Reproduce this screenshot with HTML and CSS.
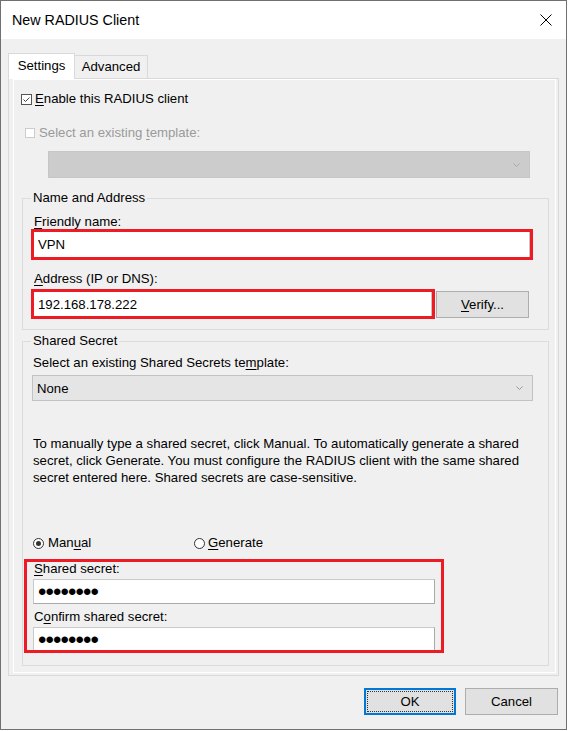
FILE: index.html
```html
<!DOCTYPE html>
<html lang="en">
<head>
<meta charset="utf-8">
<title>New RADIUS Client</title>
<link rel="stylesheet" href="styles.css">
</head>
<body>
<div class="window">
  <div class="titlebar">
    <span class="title">New RADIUS Client</span>
    <svg class="close" width="12" height="12" viewBox="0 0 12 12"><path d="M0.5 0.5 L11.5 11.5 M11.5 0.5 L0.5 11.5" stroke="#000" stroke-width="1" fill="none"/></svg>
  </div>
  <div class="tabs">
    <div class="tab active">Settings</div>
    <div class="tab">Advanced</div>
  </div>
  <div class="panel">
    <div class="page">
      <label class="check row-enable">
        <svg class="box" width="11" height="11" viewBox="0 0 11 11"><rect x="0.5" y="0.5" width="10" height="10" fill="#fff" stroke="#555"/><path d="M2.5 5.5 L4.5 7.5 L8.5 3.5" fill="none" stroke="#444"/></svg>
        <span><u>E</u>nable this RADIUS client</span>
      </label>
      <label class="check row-template">
        <span class="box-disabled"></span>
        <span>Select an existing <u>t</u>emplate:</span>
      </label>
      <div class="combo combo-disabled">
        <span></span>
        <svg width="7" height="4" viewBox="0 0 7 4"><path d="M0.5 0.5 L3.5 3.5 L6.5 0.5" fill="none" stroke="#a8a8a8"/></svg>
      </div>

      <fieldset class="group group-name">
        <legend>Name and Address</legend>
        <div class="field-label label-name"><u>F</u>riendly name:</div>
        <div class="mark mark-name"><div class="textbox">VPN</div></div>
        <div class="field-label label-address"><u>A</u>ddress (IP or DNS):</div>
        <div class="address-row">
          <div class="mark mark-address"><div class="textbox textbox-short">192.168.178.222</div></div>
          <button class="btn verify"><u>V</u>erify...</button>
        </div>
      </fieldset>

      <fieldset class="group group-secret">
        <legend>Shared Secret</legend>
        <div class="field-label label-template">Select an existing Shared Secrets te<u>m</u>plate:</div>
        <div class="combo combo-none">
          <span>None</span>
          <svg width="7" height="4" viewBox="0 0 7 4"><path d="M0.5 0.5 L3.5 3.5 L6.5 0.5" fill="none" stroke="#999"/></svg>
        </div>
        <p class="help">To manually type a shared secret, click Manual. To automatically generate a shared<br>secret, click Generate. You must configure the RADIUS client with the same shared<br>secret entered here. Shared secrets are case-sensitive.</p>
        <div class="radios">
          <label class="radio radio-manual"><span class="dot on"></span>Man<u>u</u>al</label>
          <label class="radio radio-generate"><span class="dot"></span><u>G</u>enerate</label>
        </div>
        <div class="mark mark-secret">
          <div class="field-label label-secret"><u>S</u>hared secret:</div>
          <div class="pw"><span class="dots">••••••••</span></div>
          <div class="field-label label-confirm">C<u>o</u>nfirm shared secret:</div>
          <div class="pw pw-last"><span class="dots">••••••••</span></div>
        </div>
      </fieldset>
    </div>
  </div>
  <div class="actions">
    <button class="btn ok"><span class="focus">OK</span></button>
    <button class="btn cancel">Cancel</button>
  </div>
</div>
</body>
</html>
```

FILE: styles.css
```css
* { box-sizing: border-box; }

body {
  margin: 0;
  background: #ffffff;
  font-family: "Liberation Sans", Arial, sans-serif;
  font-size: 13.2px;
  color: #000;
}

u { text-decoration-thickness: 1px; text-underline-offset: 2px; }

.window {
  width: 567px;
  height: 730px;
  border: 1px solid #707070;
  background: #f0f0f0;
  display: flex;
  flex-direction: column;
}

.titlebar {
  height: 38px;
  flex: none;
  background: #fff;
  display: flex;
  align-items: center;
  justify-content: space-between;
  padding: 0 14px 0 11px;
}
.title { font-size: 14.3px; }
.close { display: block; }

.tabs {
  display: flex;
  align-items: flex-end;
  height: 25px;
  margin: 14px 0 0 7px;
}
.tab {
  width: 73px;
  height: 23px;
  border: 1px solid #d9d9d9;
  border-left: 0;
  border-bottom: 0;
  background: #f0f0f0;
  text-align: center;
  line-height: 22px;
}
.tab.active {
  width: 67px;
  height: 26px;
  border-left: 1px solid #d9d9d9;
  background: #fff;
  margin-bottom: -1px;
  position: relative;
  z-index: 1;
  line-height: 23px;
}

.panel {
  margin: 0 7px;
  border: 1px solid #d9d9d9;
  padding: 0 2px 2px 4px;
}
.page {
  border: 1px solid #fff;
  padding: 0 6px 6px 8px;
}

.check {
  display: flex;
  align-items: center;
  height: 16px;
  line-height: 16px;
}
.row-enable { margin-top: 11px; margin-left: -1px; }
.row-enable .box { display: block; margin-right: 3px; }
.row-template { margin-top: 18px; padding-left: 3px; color: #9a9a9a; }
.box-disabled {
  width: 10px;
  height: 10px;
  border: 1px solid #cccccc;
  background: #fff;
  margin-right: 4px;
}

.combo {
  display: flex;
  align-items: center;
  justify-content: space-between;
}
.combo svg { display: block; }
.combo-disabled {
  margin: 10px 0 0 26px;
  width: 482px;
  height: 27px;
  background: #cccccc;
  border: 1px solid #c6c6c6;
  padding-right: 9px;
}
.combo-none {
  margin: 5px 0 0 9px;
  width: 501px;
  height: 26px;
  background: #e5e5e5;
  border: 1px solid #c2c2c2;
  padding: 0 9px 0 4px;
}

.group {
  margin: 0;
  width: 527px;
  min-width: 0;
  border: 1px solid #dcdcdc;
  padding: 0;
}
.group legend {
  margin-left: 8px;
  padding: 0 2px;
  line-height: 16px;
}
.group-name { margin-top: 12px; padding-bottom: 10px; }
.group-secret { margin-top: 3px; padding-bottom: 12px; }

.field-label {
  height: 14px;
  line-height: 14px;
  margin-left: 11px;
}
.label-name { margin-top: 9px; }
.label-address { margin-top: 12px; }
.label-template { margin-top: 7px; margin-left: 10px; }

.mark { border: 3px solid #ed1c24; }
.mark-name { margin-left: 8px; width: 502px; }
.textbox {
  background: #fff;
  height: 25px;
  display: flex;
  align-items: center;
  padding-left: 4px;
  border-right: 1px solid #c4c4c4;
}
.textbox-short { height: 24px; }

.address-row {
  display: flex;
  align-items: center;
  gap: 1px;
  margin: 3px 0 0 8px;
}
.mark-address { width: 404px; }

.btn {
  font: inherit;
  color: #000;
  background: #e1e1e1;
  border: 1px solid #adadad;
  padding: 0;
}
.verify { width: 93px; height: 27px; }

.help {
  margin: 34px 0 0 10px;
  line-height: 17px;
}

.radios {
  display: flex;
  height: 16px;
  line-height: 16px;
  margin: 49px 0 0 10px;
}
.radio { display: flex; align-items: center; }
.radio-manual { width: 161px; }
.dot {
  width: 11px;
  height: 11px;
  border: 1px solid #333;
  border-radius: 50%;
  background: #fff;
  display: flex;
  align-items: center;
  justify-content: center;
  margin-right: 4px;
}
.radio-generate .dot { margin-right: 3px; }
.dot.on::after {
  content: "";
  width: 5px;
  height: 5px;
  border-radius: 50%;
  background: #333;
}

.mark-secret {
  margin: 8px 0 0 1px;
  width: 420px;
}
.mark-secret .field-label { margin-left: 7px; }
.label-confirm { margin-top: 6px; }
.pw {
  margin: 3px 0 0 6px;
  width: 402px;
  height: 25px;
  background: #fff;
  border: 1px solid;
  border-color: #c9c9c9 #a9a9a9 #a9a9a9 #c9c9c9;
  display: flex;
  align-items: center;
  padding-left: 4px;
}
.pw-last { height: 23px; border-bottom: 0; }
.dots {
  font-size: 24px;
  letter-spacing: -0.9px;
  line-height: 1;
  margin-top: 1px;
}

.actions {
  display: flex;
  justify-content: flex-end;
  gap: 9px;
  margin-top: 12px;
  padding-right: 8px;
}
.ok {
  width: 92px;
  height: 27px;
  border: 2px solid #0078d7;
  padding: 1px;
}
.focus {
  display: flex;
  align-items: center;
  justify-content: center;
  height: 100%;
  border: 1px dotted #333;
}
.cancel { width: 93px; height: 27px; }
```
